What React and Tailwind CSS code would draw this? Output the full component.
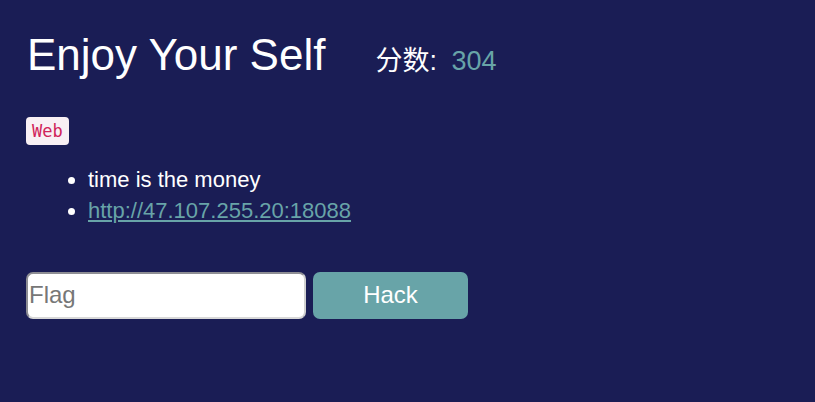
export default function App() {
  return (
    <div className="min-h-[402px] w-full bg-[#1a1d55] text-white px-[26px] pt-[29px] font-['Liberation_Sans','Noto_Sans_CJK_SC',sans-serif]">
      <div className="flex items-baseline">
        <h1 className="text-[44px] leading-[52px] ml-[1px]">Enjoy Your Self</h1>
        <div className="ml-[50px] text-[27px]">
          分数: <span className="text-[#68a4a8] ml-[7px]">304</span>
        </div>
      </div>
      <div className="mt-[35px]">
        <span className="inline-block rounded-[4px] bg-[#f8f0f4] px-[6px] py-[3px] text-[17px] leading-[22px] text-[#d0245a] font-['DejaVu_Sans_Mono',monospace]">
          Web
        </span>
      </div>
      <ul className="list-disc pl-[62px] mt-[19px] text-[22px] leading-[31px]">
        <li>time is the money</li>
        <li>
          <a href="#" className="text-[#68a4a8] underline">
            http://47.107.255.20:18088
          </a>
        </li>
      </ul>
      <div className="flex mt-[46px] gap-[7px]">
        <input
          placeholder="Flag"
          className="w-[280px] h-[47px] rounded-[7px] border-2 border-[#8e8e94] border-b-[#d8d8d8] border-r-[#d0d0d0] bg-white px-[1px] text-[24px] text-black placeholder:text-[#777]"
        />
        <button className="w-[155px] h-[47px] rounded-[7px] bg-[#68a4a8] text-[24px] text-white">
          Hack
        </button>
      </div>
    </div>
  );
}
